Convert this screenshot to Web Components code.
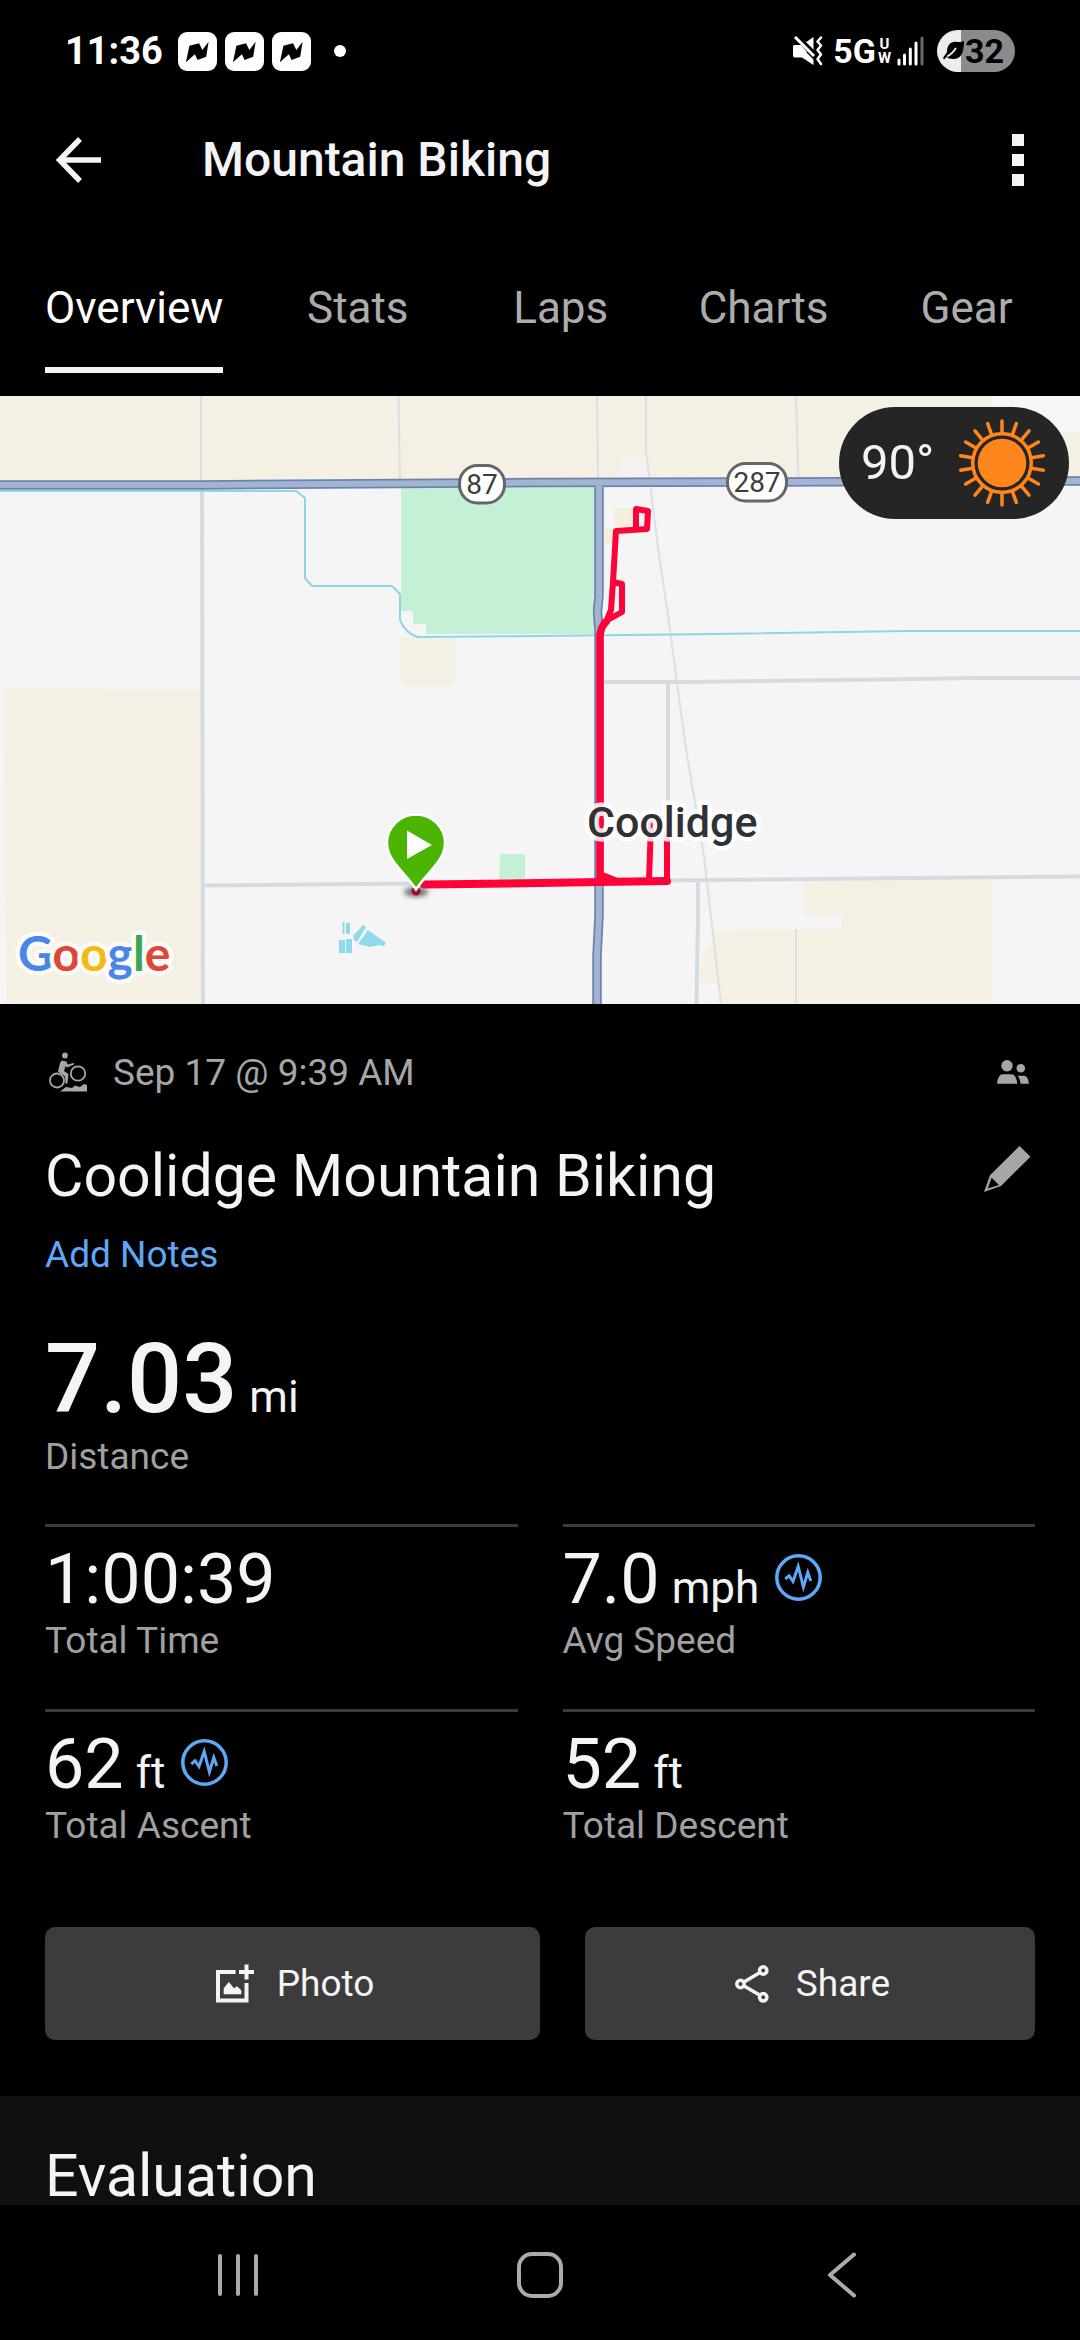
<!DOCTYPE html>
<html lang="en">
<head>
<meta charset="utf-8">
<meta name="viewport" content="width=device-width, initial-scale=1">
<title>Mountain Biking</title>
<style>
  html, body { margin: 0; background: #000; }
  body { font-family: Roboto, "Noto Sans", sans-serif; color: #f4f4f4; }
</style>
</head>
<body>
<activity-app>
  <status-bar slot="top" time="11:36" battery="32"></status-bar>
  <app-header slot="top">Mountain Biking</app-header>
  <tab-bar slot="top" tabs="Overview,Stats,Laps,Charts,Gear"></tab-bar>
  <route-map><weather-pill>90°</weather-pill></route-map>
  <activity-summary date="Sep 17 @ 9:39 AM">
    Coolidge Mountain Biking
    <metric-tile slot="hero" size="hero" value="7.03" unit="mi">Distance</metric-tile>
    <metric-tile slot="metrics" value="1:00:39">Total Time</metric-tile>
    <metric-tile slot="metrics" value="7.0" unit="mph" insight>Avg Speed</metric-tile>
    <metric-tile slot="metrics" value="62" unit="ft" insight>Total Ascent</metric-tile>
    <metric-tile slot="metrics" value="52" unit="ft">Total Descent</metric-tile>
    <action-button slot="actions" style="flex:11">
      <svg slot="icon" width="45" height="39" viewBox="-5 0 45 39" fill="none" stroke="#f4f4f4" stroke-width="4" aria-hidden="true">
        <path d="M19.500 8H2V36.500H30.500V19M23 8H38M30.500 .5V15.500"/>
        <path d="M7.700 30.300V24.300L12.800 18 18 24.300 21 22.300 25.300 26.300V30.300Z" fill="#f4f4f4" stroke="none"/>
      </svg>Photo
    </action-button>
    <action-button slot="actions" style="flex:10">
      <svg slot="icon" width="45" height="38" viewBox="-5 0 45 38" fill="none" stroke="#f4f4f4" stroke-width="3.500" aria-hidden="true">
        <circle cx="5.500" cy="19" r="3.700"/><circle cx="28.200" cy="5.500" r="3.700"/><circle cx="28.200" cy="32.300" r="3.700"/>
        <path d="M9 17L25 7.500M9 21L25 30.300"/>
      </svg>Share
    </action-button>
  </activity-summary>
  <section-card>Evaluation</section-card>
  <system-nav slot="bottom"></system-nav>
</activity-app>

<script>
const define = (name, render) => customElements.define(name, class extends HTMLElement {
  connectedCallback() {
    if (this.shadowRoot) return;
    this.attachShadow({ mode: 'open' }).innerHTML = render(this);
  }
});

const reset = `
  *{box-sizing:border-box}
  button{font:inherit;color:inherit;background:none;border:0;padding:0;margin:0;cursor:pointer}
  svg{display:block;flex:none}`;

define('activity-app', () => `
  <style>
    :host{display:flex;flex-direction:column;height:100vh;background:#000}
    main{flex:1;min-height:0;overflow:hidden;display:flex;flex-direction:column}
  </style>
  <slot name="top"></slot>
  <main><slot></slot></main>
  <slot name="bottom"></slot>`);

/* System status bar */
define('status-bar', el => {
  const news = `<svg width="39" height="39" viewBox="0 0 39 39" aria-hidden="true"><rect width="39" height="39" rx="9" fill="#fff"/><path d="M11.400 13.700L21 11.300 24.400 18 30.600 9.700 28.200 24.700 19.600 28 16.900 22.300 7.900 30.300Z" fill="#000"/></svg>`;
  return `
  <style>${reset}
    :host{display:flex;align-items:center;justify-content:space-between;height:102px;padding:0 65px;color:#fff;font-weight:700;line-height:40px}
    .side,.apps{display:flex;align-items:center}
    .time{font-size:38px;margin-right:15px}
    .apps{gap:8px;margin-right:23px}
    .net{font-size:34px;margin-left:10px}
    .uw{display:flex;flex-direction:column;font-size:15px;line-height:14px;margin:0 6px 0 2px;text-align:center}
    .battery{display:flex;align-items:center;justify-content:flex-end;width:78px;height:42px;margin-left:13px;padding-right:11px;border-radius:21px;font-size:34px;color:#000;
      background:linear-gradient(90deg,#ededed 24px,#8b8b8b 24px)}
  </style>
  <div class="side">
    <span class="time">${el.getAttribute('time')}</span>
    <span class="apps">${news}${news}${news}</span>
    <svg width="12" height="12" aria-hidden="true"><circle cx="6" cy="6" r="6" fill="#fff"/></svg>
  </div>
  <div class="side">
    <svg width="30" height="30" viewBox="0 0 30 30" aria-hidden="true">
      <path d="M2 9H9L20.500 1V29L9 21.500H2Q0 21.500 0 19V11Q0 9 2 9Z" fill="#fff"/>
      <path d="M0 -2L24 22" stroke="#000" stroke-width="7"/><path d="M2 1L21 20" stroke="#fff" stroke-width="3"/>
      <path d="M0 14V12Q0 9 2 9H8L14 16 9 21H2Q0 21 0 19Z" fill="#fff"/>
      <path d="M28 1.500L24.500 5.500 28 9.500 24.500 14 28 18.500 24.500 23 28 28" fill="none" stroke="#fff" stroke-width="2.500" stroke-linejoin="round" stroke-linecap="round"/>
    </svg>
    <span class="net">5G</span><span class="uw"><span>U</span><span>W</span></span>
    <svg width="27" height="30" viewBox="0 0 27 30" stroke="#fff" stroke-width="3" stroke-linecap="round" aria-hidden="true">
      <path d="M2 24V28M7.500 19V28M13.300 13V28M19 7V28"/><path d="M25 2V28" stroke="#6a6a6a"/>
    </svg>
    <span class="battery">
      <svg width="22" height="22" viewBox="0 0 22 22" aria-hidden="true"><path d="M21 1C21 13 18 19 10 19 7 19 5 18 3.500 17L1 19.500 0 18C1 16 3 14 4 12 4 5 8 1 14 2 17 2 19 2 21 1Z"/><path d="M4 16.500C8 14.500 10.500 12 13 8" stroke="#ededed" stroke-width="1.800" fill="none"/></svg>
      <span>${el.getAttribute('battery')}</span>
    </span>
  </div>`;
});

define('app-header', () => `
  <style>${reset}
    :host{display:flex;align-items:center;height:116px;padding:0 38px}
    h1{flex:1;margin:0 0 0 83px;font-size:48px;line-height:56px;font-weight:500;color:#f4f4f4}
    button{padding:0 18px}
  </style>
  <button aria-label="Back"><svg width="45" height="46" viewBox="0 0 45 46" fill="none" stroke="#f4f4f4" stroke-width="5.500" aria-hidden="true"><path d="M24 2L3.500 23 24 44M4 23H45"/></svg></button>
  <h1><slot></slot></h1>
  <button aria-label="More options"><svg width="12" height="52" viewBox="0 0 12 52" fill="#f4f4f4" aria-hidden="true"><path d="M0 0H12V12H0ZM0 20H12V32H0ZM0 40H12V52H0Z"/></svg></button>`);

define('tab-bar', el => `
  <style>${reset}
    :host{display:block}
    nav{display:flex;padding:0 12px 23px}
    button{flex:1;display:flex;justify-content:center;color:#acacac;font-size:44px;line-height:52px}
    button[aria-selected=true]{flex:none;padding:0 33px;color:#fff}
    span{padding:64px 0 33px;border-bottom:6px solid transparent}
    [aria-selected=true] span{border-color:#f4f4f4}
  </style>
  <nav role="tablist">${el.getAttribute('tabs').split(',').map((t, i) =>
    `<button role="tab" aria-selected="${i === 0}"><span>${t}</span></button>`).join('')}</nav>`);

/* Map canvas with the recorded track */
define('route-map', () => `
  <style>${reset}
    :host{display:block;position:relative;background:#f5f5f5;flex:none}
    svg{width:100%;height:auto}
    ::slotted(weather-pill){position:absolute;top:11px;right:11px}
    text{font-family:Roboto,sans-serif}
  </style>
  <svg viewBox="0 0 1080 608" role="img" aria-label="Map of the ride around Coolidge">
    <defs><filter id="soft" x="-50%" y="-100%" width="200%" height="300%"><feGaussianBlur stdDeviation="2.500"/></filter></defs>
    <rect width="1080" height="608" fill="#f5f5f5"/>
    <g fill="#f4f0e4">
      <path d="M0 0H992V36H1080V86H0Z"/>
      <path d="M4 292H104V294H201V608H6Z"/>
      <path d="M401 241H455V290H401Z"/>
      <path d="M803 484H992V608H721L719 588 699 586 702 561 712 549V535L803 533H842V519H803Z"/>
    </g>
    <path d="M992 0H1080V36H992Z" fill="#f7f7f7"/>
    <path d="M622 62H646L649 84H616Z" fill="#f3f2f1"/>
    <path d="M614 112H634V130H614ZM605 132H614V148H605Z" fill="#f8eedb"/>
    <g fill="#c4f0d5"><path d="M401 90H595V238H426V228H413V215H401Z"/><path d="M500 458H525V485H499Z"/></g>
    <g fill="none" stroke="#dcdfe3" stroke-width="2">
      <path d="M201 0V90M398.500 0L400 88M597 0L598 86M796 0L798.500 84"/>
      <path d="M646 0V55L659 159 667 212 686 353 704 460 721 608M796 533V608"/>
    </g>
    <g fill="none" stroke="#d5dce1" stroke-width="4">
      <path d="M202 90L203 608M203 489.500L416 487.500M604 286H680L843 284 980 282H1080M668 286V484M668 484.500L860 482.500 1080 480.500M698 485V520L696.500 608"/>
    </g>
    <path d="M0 95H296L305 102V182L312 190H392L400 198V224Q406 238 418 241L540 240 715 238 908 235H1080" fill="none" stroke="#8fd5e8" stroke-width="2"/>
    <g fill="none">
      <path d="M0 89H200L540 86.500 1080 85M599 88V200L597.500 215 599 235V520L597 560V612" stroke="#6f82ac" stroke-width="9.500"/>
      <path d="M0 89H200L540 86.500 1080 85M599 88V200L597.500 215 599 235V520L597 560V612" stroke="#a1b4d4" stroke-width="6"/>
    </g>
    <g fill="#8fdaea"><path d="M339 544H345V557H339ZM346 543H352V557H346ZM346 527H350V538H346ZM342.500 526H344.500V538H342.500ZM363 529L366 531 357 546 354 544 353 540ZM368 534L386 547 384 550 379 549 370 551 358 548Z"/></g>
    <g fill="none" stroke="#fe0339" stroke-linejoin="round" stroke-linecap="round">
      <path d="M424 488.500L540 487 600 486 667 485" stroke-width="8"/>
      <path d="M600 485V246Q599 232 606 226" stroke-width="7.500"/>
      <path d="M600 478L620 486" stroke-width="6"/>
      <path d="M606 226L611 214 613 186 616 135 647 133 648 115 636 113V132M613 186L622 188V216L604 226" stroke-width="6"/>
      <path d="M649 484L651 428M667 484V430" stroke-width="6"/>
    </g>
    <ellipse cx="416" cy="496" rx="12" ry="5" fill="#555" opacity=".8" filter="url(#soft)"/>
    <circle cx="416" cy="495" r="4.500" fill="#9b1030"/>
    <path d="M416 493.500C404 475 387 465 387 447A29 28.500 0 0 1 445 447C445 465 428 475 416 493.500Z" fill="#4bb400" stroke="#fff" stroke-width="2.500"/>
    <path d="M407 434.500L432 449 407 463Z" fill="#fff"/>
    <g fill="#fff" stroke="#666" stroke-width="3">
      <rect x="459.500" y="69.500" width="45" height="37.500" rx="18"/>
      <rect x="727.500" y="67.500" width="59" height="37.500" rx="18"/>
    </g>
    <g fill="#3c3c3c" font-size="28" text-anchor="middle"><text x="482" y="98">87</text><text x="757" y="96">287</text></g>
    <text x="587" y="441" font-size="43" font-weight="500" fill="#303134" stroke="#fff" stroke-opacity=".85" stroke-width="9" stroke-linejoin="round" paint-order="stroke">Coolidge</text>
    <text x="18" y="575" style="font-family:Lato,sans-serif" font-size="48" font-weight="700" stroke="#fbfaf7" stroke-width="9" stroke-linejoin="round" paint-order="stroke"><tspan fill="#4a86e8">G</tspan><tspan fill="#df4638">o</tspan><tspan fill="#f5b912">o</tspan><tspan fill="#4a86e8">g</tspan><tspan fill="#3aa757">l</tspan><tspan fill="#df4638">e</tspan></text>
  </svg>
  <slot></slot>`);

define('weather-pill', () => {
  const rays = Array.from({ length: 18 }, (_, i) => `<path d="M0 -30V-42" transform="rotate(${i * 20})"/>`).join('');
  return `
  <style>${reset}
    :host{display:block}
    button{display:flex;align-items:center;justify-content:space-between;width:230px;height:112px;padding:0 23px 0 22px;border-radius:56px;background:#252525;color:#f4f4f4;font-size:49px;line-height:56px}
  </style>
  <button aria-label="Weather"><slot></slot>
    <svg width="88" height="88" viewBox="-44 -44 88 88" aria-hidden="true"><g fill="none" stroke="#ff861c" stroke-width="3.500" stroke-linecap="round"><circle r="29.300"/>${rays}</g><circle r="24.300" fill="#ff861c"/></svg>
  </button>`;
});

define('activity-summary', el => `
  <style>${reset}
    :host{display:block;flex:none;padding:40px 45px 56px}
    .row{display:flex;align-items:center;justify-content:space-between}
    .meta{height:56px;color:#a6a6a6;font-size:37px}
    .when{display:flex;align-items:center;gap:25px;padding-left:4px}
    .shared{margin-right:6px}
    .title{margin:40px 0 21px}
    h2{margin:0;font-size:59px;line-height:72px;font-weight:400;color:#f4f4f4}
    .pencil{padding:0 4px 14px 8px}
    a{display:block;width:max-content;margin-bottom:46px;color:#5ea8f7;font-size:37px;line-height:44px;text-decoration:none}
    .metrics{display:grid;grid-template-columns:1fr 1fr;column-gap:45px;margin:45px 0 33px}
    .actions{display:flex;gap:45px}
  </style>
  <div class="row meta">
    <span class="when">
      <svg width="39" height="40" viewBox="0 0 39 40" fill="none" stroke="#a6a6a6" aria-hidden="true">
        <circle cx="8" cy="28.500" r="7" stroke-width="1.800"/><circle cx="29" cy="21.500" r="7.200" stroke-width="1.800"/>
        <circle cx="16" cy="3.500" r="2.900" fill="#a6a6a6" stroke="none"/>
        <path d="M12.500 8.500L17.500 9.500 18.500 12.500 25 11V12.500L18 15.500 16.500 14 15 19 19.500 22 18.500 31 16.500 32 16 24.500 9 19.500 11 11Z" fill="#a6a6a6" stroke="none"/>
        <path d="M11 39.500L17 35 23 36 26 33.500 31 35 35 32 38 33V39.500Z" fill="#a6a6a6" stroke="none"/>
      </svg>
      <span>${el.getAttribute('date')}</span>
    </span>
    <svg class="shared" width="32" height="24" viewBox="0 0 32 24" fill="#a6a6a6" role="img" aria-label="Shared with connections">
      <circle cx="10" cy="5.700" r="5.700"/><circle cx="23.800" cy="8.200" r="4.300"/>
      <path d="M0 23.700Q1 14.300 6 14.300H14.500Q19 14.300 20.300 23.700ZM20.800 15.700H27Q31 15.700 32 23.700H23.700Q23 18.500 20.800 15.700Z"/>
    </svg>
  </div>
  <div class="row title">
    <h2><slot></slot></h2>
    <button class="pencil" aria-label="Edit title"><svg width="47" height="46" viewBox="0 0 47 46" fill="#a6a6a6" aria-hidden="true"><path fill-rule="evenodd" d="M35.500 0L46.500 10.700 17 40 0 46 6 29.300ZM7.600 31.700L15 39 3.800 42.500Z"/></svg></button>
  </div>
  <a href="#notes">Add Notes</a>
  <slot name="hero"></slot>
  <div class="metrics"><slot name="metrics"></slot></div>
  <div class="actions"><slot name="actions"></slot></div>`);

define('metric-tile', el => `
  <style>${reset}
    :host{display:block;border-top:3px solid #3b3b3b;padding:12px 0 46px}
    :host([size=hero]){border:0;padding:0}
    .reading{display:flex;align-items:baseline;gap:12px;color:#f4f4f4}
    .value{font-size:70px;line-height:80px}
    .unit{font-size:44px;line-height:52px}
    :host([size=hero]) .value{font-size:97px;line-height:112px;font-weight:500}
    .label{font-size:37px;line-height:44px;color:#a0a0a0}
    button{align-self:center;margin-left:4px;padding-bottom:4px}
  </style>
  <div class="reading"><span class="value">${el.getAttribute('value')}</span>${
    el.hasAttribute('unit') ? `<span class="unit">${el.getAttribute('unit')}</span>` : ''}${
    el.hasAttribute('insight') ? `<button aria-label="Insights"><svg width="47" height="47" viewBox="0 0 47 47" fill="none" stroke="#5ea8f7" stroke-width="3.500" aria-hidden="true"><circle cx="23.500" cy="23.500" r="21.700"/><path d="M10.300 25L14.100 21.700 18 27.500 23.200 12.500 28.400 33 32.800 18.500 35.800 27" stroke-width="3" stroke-linejoin="miter"/></svg></button>` : ''}</div>
  <div class="label"><slot></slot></div>`);

define('action-button', () => `
  <style>${reset}
    :host{display:block}
    button{display:flex;align-items:center;justify-content:center;gap:21px;width:100%;height:113px;border-radius:10px;background:#3c3c3c;color:#f4f4f4;font-size:37px;line-height:44px}
  </style>
  <button><slot name="icon"></slot><span><slot></slot></span></button>`);

define('section-card', () => `
  <style>
    :host{display:block;flex:1 0 auto;padding:44px 45px;background:#101010}
    h2{margin:0;font-size:59px;line-height:72px;font-weight:400;color:#f4f4f4}
  </style>
  <h2><slot></slot></h2>`);

define('system-nav', () => `
  <style>${reset}
    :host{display:flex;align-items:center;justify-content:center;height:135px;flex:none;background:#000}
    button{display:flex;justify-content:center;width:28%;padding:10px 0 6px}
  </style>
  <button aria-label="Recent apps"><svg width="42" height="46" viewBox="0 0 42 46" stroke="#ababab" stroke-width="4" stroke-linecap="round" aria-hidden="true"><path d="M3 4V42M21 4V42M39 4V42"/></svg></button>
  <button aria-label="Home"><svg width="46" height="46" viewBox="0 0 46 46" fill="none" stroke="#ababab" stroke-width="4" aria-hidden="true"><rect x="2" y="2" width="42" height="42" rx="13"/></svg></button>
  <button aria-label="Back"><svg width="28" height="46" viewBox="0 0 28 46" fill="none" stroke="#ababab" stroke-width="4" stroke-linecap="round" stroke-linejoin="round" aria-hidden="true"><path d="M26 2.500L2 23 26 43.500"/></svg></button>`);
</script>
</body>
</html>
